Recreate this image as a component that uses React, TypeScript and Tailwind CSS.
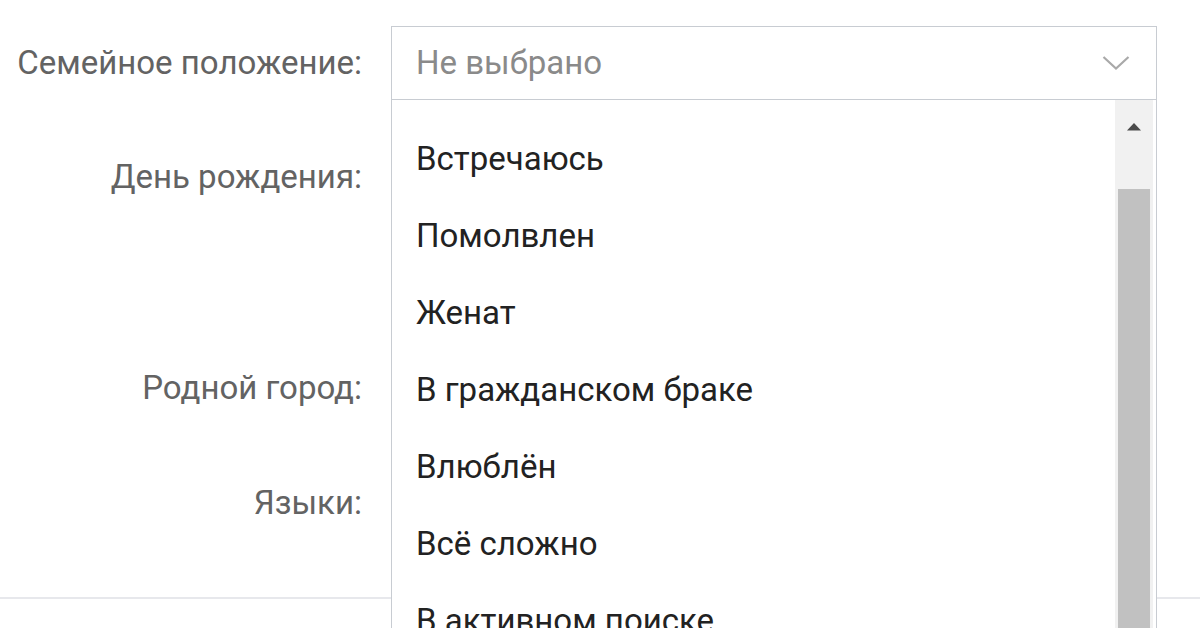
import React from "react";

const items = [
  "Встречаюсь",
  "Помолвлен",
  "Женат",
  "В гражданском браке",
  "Влюблён",
  "Всё сложно",
  "В активном поиске",
];

export default function App() {
  return (
    <div
      className="relative w-[1200px] h-[628px] overflow-hidden bg-white"
      style={{ fontFamily: "Roboto, 'Noto Sans', sans-serif" }}
    >
      <div className="flex flex-col pt-[26px]">
        <div className="flex h-[74px] items-center">
          <div className="w-[362px] text-right text-[33px] leading-[40px] text-[#636363]">Семейное положение:</div>
          <div className="relative ml-[29px] w-[766px] h-[74px]">
            <div className="flex h-full items-center justify-between border border-[#c8ccd2] pl-[24px] pr-[26px] text-[33px] leading-[40px] text-[#8a8a8a]">
              <span>Не выбрано</span>
              <svg width="28" height="16" viewBox="0 0 28 16" fill="none">
                <path d="M1.5 2 L14 13.5 L26.5 2" stroke="#a9a9a9" strokeWidth="2.2" />
              </svg>
            </div>
            <div className="absolute left-0 top-[73px] z-10 flex w-[766px] h-[560px] border-x border-t border-[#c8ccd2] bg-white">
              <div className="flex flex-1 flex-col pl-[24px] pt-[20px]">
                {items.map((t) => (
                  <div key={t} className="flex h-[77px] shrink-0 items-center text-[33px] leading-[40px] text-[#222222]">
                    {t}
                  </div>
                ))}
              </div>
              <div className="flex w-[38px] flex-col items-center bg-[#f1f1f1] mr-[3px]">
                <div className="flex h-[52px] items-center justify-center">
                  <svg width="16" height="9" viewBox="0 0 16 9">
                    <path d="M1 8.5 L8 1 L15 8.5 Z" fill="#4a4a4a" />
                  </svg>
                </div>
                <div className="mt-[37px] w-[32px] flex-1 bg-[#c1c1c1]" />
              </div>
            </div>
          </div>
        </div>
        <div className="flex h-[268px] pt-[57px]">
          <div className="w-[362px] text-right text-[33px] leading-[40px] text-[#636363]">День рождения:</div>
        </div>
        <div className="flex h-[115px]">
          <div className="w-[362px] text-right text-[33px] leading-[40px] text-[#636363]">Родной город:</div>
        </div>
        <div className="flex h-[40px]">
          <div className="w-[362px] text-right text-[33px] leading-[40px] text-[#636363]">Языки:</div>
        </div>
      </div>
      <div className="absolute left-0 top-[597px] h-[2px] w-full bg-[#e7e8ec]" />
    </div>
  );
}
